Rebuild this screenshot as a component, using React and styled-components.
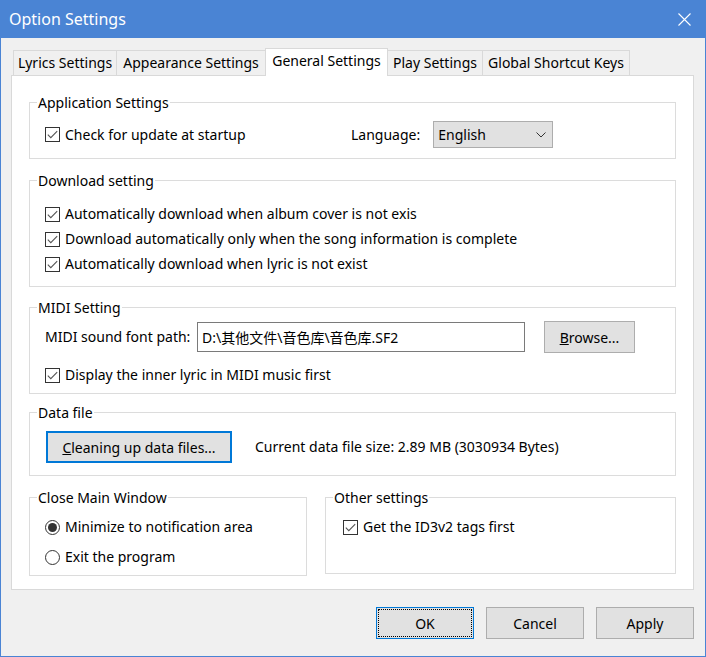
import React from 'react';
import styled, { createGlobalStyle } from 'styled-components';

const GlobalStyle = createGlobalStyle`
  html, body { margin: 0; padding: 0; background: #f0f0f0; }
  body {
    font-family: "Noto Sans", "Noto Sans CJK SC", sans-serif;
    font-size: 14px;
    color: #000;
  }
  * { box-sizing: border-box; }
`;

const Window = styled.div`
  width: 706px;
  height: 657px;
  display: flex;
  flex-direction: column;
  background: #f0f0f0;
  border: 1px solid #4a84d4;
  border-top: none;
`;

const TitleBar = styled.div`
  height: 38px;
  flex: none;
  display: flex;
  align-items: center;
  background: #4a84d4;
  padding-left: 8px;
  color: #fff;
`;

const Title = styled.span`
  font-size: 16px;
  line-height: 20px;
`;

const CloseButton = styled.div`
  margin-left: auto;
  width: 42px;
  height: 38px;
  display: flex;
  align-items: center;
  justify-content: center;
`;

const Body = styled.div`
  flex: 1;
  display: flex;
  flex-direction: column;
  padding: 10px 11px 0 10px;
`;

const TabStrip = styled.div`
  height: 28px;
  flex: none;
  display: flex;
  align-items: flex-end;
  padding-left: 3px;
  margin-bottom: -1px;
  position: relative;
  z-index: 1;
`;

const Tab = styled.div`
  width: ${p => p.$w}px;
  height: ${p => (p.$active ? 28 : 26)}px;
  margin-left: -1px;
  display: flex;
  justify-content: center;
  align-items: ${p => (p.$active ? 'flex-start' : 'center')};
  padding-top: ${p => (p.$active ? 2 : 0)}px;
  background: ${p => (p.$active ? '#fff' : '#f0f0f0')};
  border: 1px solid #d9d9d9;
  border-bottom: ${p => (p.$active ? 'none' : '1px solid #d9d9d9')};
  line-height: 20px;
  white-space: nowrap;
  position: relative;
  z-index: ${p => (p.$active ? 2 : 1)};
`;

const Panel = styled.div`
  height: 515px;
  flex: none;
  background: #fff;
  border: 1px solid #d9d9d9;
  padding: 16px 17px 0 17px;
  display: flex;
  flex-direction: column;
`;

const Group = styled.fieldset`
  margin: ${p => p.$top || 0}px 0 0 0;
  padding: 0;
  min-width: 0;
  height: ${p => p.$h}px;
  width: ${p => (p.$w ? `${p.$w}px` : 'auto')};
  flex: ${p => (p.$grow ? '1 1 0' : 'none')};
  border: 1px solid #dcdcdc;
`;

const Legend = styled.legend`
  margin-left: 7px;
  padding: 0 1px;
  line-height: 21px;
  font-size: 14px;
`;

const GroupBody = styled.div`
  padding: ${p => p.$pt || 0}px 0 0 ${p => p.$pl || 15}px;
  display: flex;
  flex-direction: column;
  gap: ${p => p.$gap || 0}px;
`;

const AppRow = styled.div`
  display: grid;
  grid-template-columns: 306px auto auto;
  align-items: center;
  justify-content: start;
  height: 27px;
`;

const CheckLabel = styled.label`
  display: flex;
  align-items: center;
  gap: 5px;
  height: 20px;
  line-height: 20px;
  white-space: nowrap;
`;

const Box = styled.span`
  width: 15px;
  height: 15px;
  border: 1px solid #333;
  background: #fff;
  display: flex;
  align-items: center;
  justify-content: center;
  flex: none;
`;

const RadioCircle = styled.span`
  width: 15px;
  height: 15px;
  border: 1px solid #333;
  border-radius: 50%;
  background: #fff;
  display: flex;
  align-items: center;
  justify-content: center;
  flex: none;
  &::after {
    content: '';
    display: ${p => (p.$on ? 'block' : 'none')};
    width: 9px;
    height: 9px;
    border-radius: 50%;
    background: #333;
  }
`;

const FieldLabel = styled.span`
  line-height: 20px;
  white-space: nowrap;
  margin-right: ${p => p.$mr || 0}px;
  width: ${p => (p.$w ? `${p.$w}px` : 'auto')};
  flex: none;
`;

const Combo = styled.div`
  width: 120px;
  height: 27px;
  margin-left: -1px;
  background: #e1e1e1;
  border: 1px solid #adadad;
  display: flex;
  align-items: center;
  justify-content: space-between;
  padding: 0 6px 0 4px;
`;

const PathRow = styled.div`
  display: flex;
  align-items: center;
  height: 32px;
`;

const TextInput = styled.div`
  width: 328px;
  height: 30px;
  border: 1px solid #7a7a7a;
  background: #fff;
  display: flex;
  align-items: center;
  padding-left: 4px;
  margin-right: 19px;
  white-space: nowrap;
`;

const Button = styled.div`
  width: ${p => p.$w}px;
  height: 32px;
  background: #e1e1e1;
  border: ${p => (p.$focus ? '2px solid #0078d7' : '1px solid #adadad')};
  display: flex;
  align-items: center;
  justify-content: center;
  white-space: nowrap;
  flex: none;
`;

const DefaultButton = styled(Button)`
  border: 1px solid #0078d7;
  outline: 1px dotted #000;
  outline-offset: -3px;
`;

const DataRow = styled.div`
  display: flex;
  align-items: center;
  gap: 23px;
  height: 32px;
  padding-left: 1px;
`;

const BottomRow = styled.div`
  display: flex;
  gap: 18px;
  align-items: flex-start;
  margin-top: 11px;
  flex: none;
`;

const Footer = styled.div`
  display: flex;
  justify-content: flex-end;
  gap: 12px;
  margin-top: 17px;
`;

const CheckMark = () => (
  <svg width="11" height="9" viewBox="0 0 11 9">
    <polyline points="0.8,4.6 3.8,7.6 10.2,1.2" fill="none" stroke="#555" strokeWidth="1.1" />
  </svg>
);

const Check = ({ children }) => (
  <CheckLabel>
    <Box><CheckMark /></Box>
    <span>{children}</span>
  </CheckLabel>
);

const Radio = ({ on, children }) => (
  <CheckLabel>
    <RadioCircle $on={on} />
    <span>{children}</span>
  </CheckLabel>
);

const tabs = [
  { label: 'Lyrics Settings', w: 104 },
  { label: 'Appearance Settings', w: 150 },
  { label: 'General Settings', w: 123, active: true },
  { label: 'Play Settings', w: 96 },
  { label: 'Global Shortcut Keys', w: 148 },
];

export default function App() {
  return (
    <>
      <GlobalStyle />
      <Window>
        <TitleBar>
          <Title>Option Settings</Title>
          <CloseButton>
            <svg width="13" height="13" viewBox="0 0 13 13">
              <path d="M0.5 0.5 L12.5 12.5 M12.5 0.5 L0.5 12.5" stroke="#fff" strokeWidth="1.1" />
            </svg>
          </CloseButton>
        </TitleBar>
        <Body>
          <TabStrip>
            {tabs.map(t => (
              <Tab key={t.label} $w={t.w} $active={t.active}>{t.label}</Tab>
            ))}
          </TabStrip>
          <Panel>
            <Group $h={67}>
              <Legend>Application Settings</Legend>
              <GroupBody $pt={8} $pl={15}>
                <AppRow>
                  <Check>Check for update at startup</Check>
                  <FieldLabel $mr={14}>Language:</FieldLabel>
                  <Combo>
                    <span>English</span>
                    <svg width="10" height="6" viewBox="0 0 10 6">
                      <polyline points="0.5,0.5 5,5 9.5,0.5" fill="none" stroke="#333" strokeWidth="1" />
                    </svg>
                  </Combo>
                </AppRow>
              </GroupBody>
            </Group>

            <Group $h={117} $top={11}>
              <Legend>Download setting</Legend>
              <GroupBody $pt={13} $pl={15} $gap={5}>
                <Check>Automatically download when album cover is not exis</Check>
                <Check>Download automatically only when the song information is complete</Check>
                <Check>Automatically download when lyric is not exist</Check>
              </GroupBody>
            </Group>

            <Group $h={97} $top={10}>
              <Legend>MIDI Setting</Legend>
              <GroupBody $pt={3} $pl={15} $gap={12}>
                <PathRow>
                  <FieldLabel $w={152}>MIDI sound font path:</FieldLabel>
                  <TextInput>D:\其他文件\音色库\音色库.SF2</TextInput>
                  <Button $w={91}><span><u>B</u>rowse...</span></Button>
                </PathRow>
                <Check>Display the inner lyric in MIDI music first</Check>
              </GroupBody>
            </Group>

            <Group $h={74} $top={8}>
              <Legend>Data file</Legend>
              <GroupBody $pt={8} $pl={15}>
                <DataRow>
                  <Button $w={186} $focus><span><u>C</u>leaning up data files...</span></Button>
                  <FieldLabel>Current data file size: 2.89 MB (3030934 Bytes)</FieldLabel>
                </DataRow>
              </GroupBody>
            </Group>

            <BottomRow>
              <Group $h={89} $w={278}>
                <Legend>Close Main Window</Legend>
                <GroupBody $pt={9} $pl={15} $gap={10}>
                  <Radio on>Minimize to notification area</Radio>
                  <Radio>Exit the program</Radio>
                </GroupBody>
              </Group>
              <Group $h={87} $grow>
                <Legend>Other settings</Legend>
                <GroupBody $pt={9} $pl={17}>
                  <Check>Get the ID3v2 tags first</Check>
                </GroupBody>
              </Group>
            </BottomRow>
          </Panel>
          <Footer>
            <DefaultButton $w={98}>OK</DefaultButton>
            <Button $w={98}>Cancel</Button>
            <Button $w={98}>Apply</Button>
          </Footer>
        </Body>
      </Window>
    </>
  );
}
